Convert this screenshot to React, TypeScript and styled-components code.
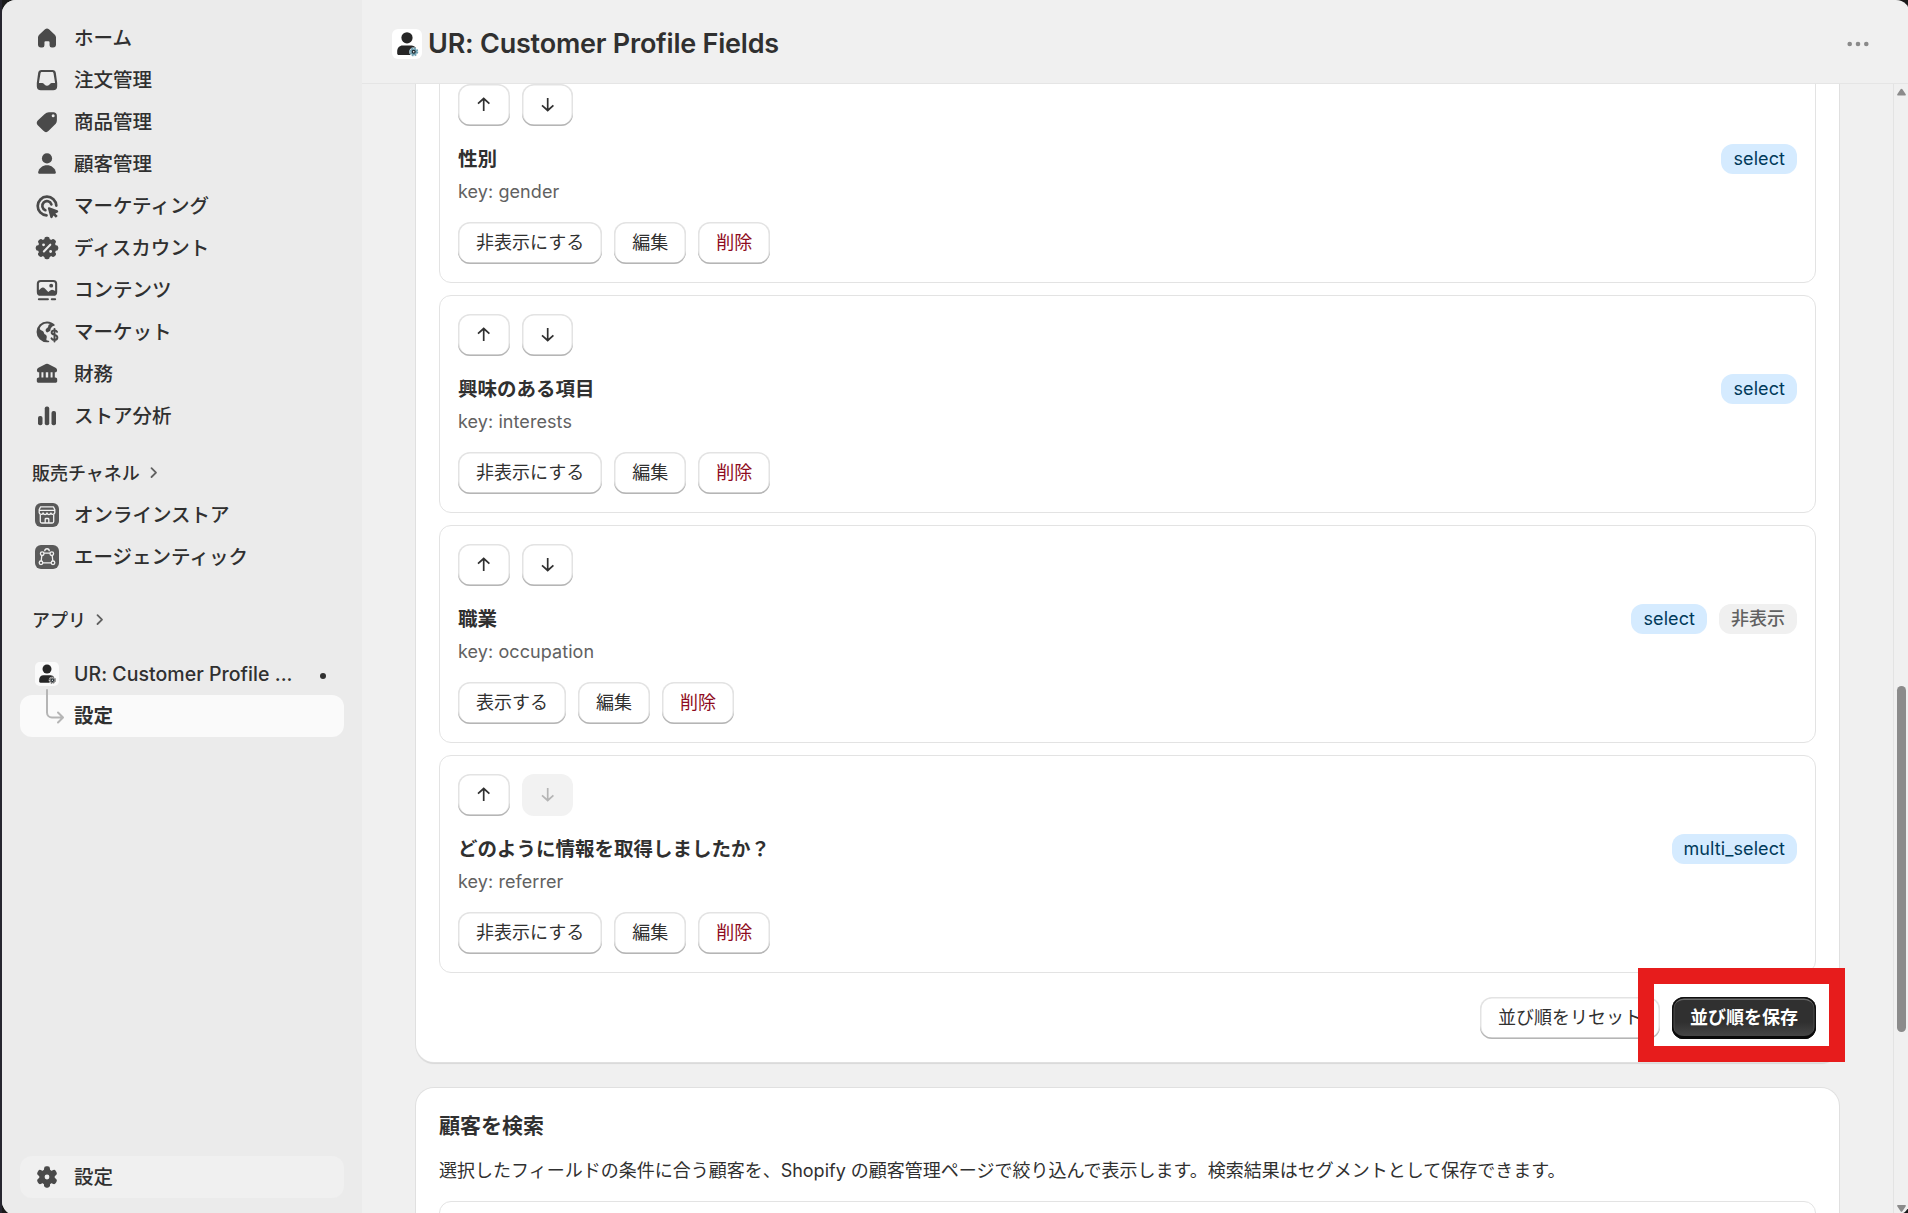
import React from 'react';
import styled, { createGlobalStyle, css } from 'styled-components';

const Global = createGlobalStyle`
  * { box-sizing: border-box; }
  html, body { margin: 0; padding: 0; height: 100%; overflow: hidden; background: #1a1a1a; }
  body { font-family: Inter, "Noto Sans CJK JP", sans-serif; color: #303030; font-size: 18px; }
  button { font: inherit; color: inherit; }
`;

const Desktop = styled.div`
  height: 1213px;
  width: 1908px;
  padding-left: 2px;
  overflow: hidden;
  background: linear-gradient(to right, #26252f 2px, #1a1a1a 2px);
`;

const Frame = styled.div`
  display: flex;
  width: 1908px;
  height: 1215px;
  border-radius: 14px;
  overflow: hidden;
  background: #f0f0f0;
`;

const Sidebar = styled.nav`
  flex: 0 0 360px;
  display: flex;
  flex-direction: column;
  padding: 17px 18px;
  background: #ebebeb;
`;

const NavItem = styled.a<{ $bg?: string; $bold?: boolean }>`
  display: flex;
  align-items: center;
  gap: 12px;
  flex: 0 0 42px;
  padding: 0 12px;
  border-radius: 12px;
  background: ${(p) => p.$bg || 'transparent'};
  font-size: 19.5px;
  font-weight: ${(p) => (p.$bold ? 700 : 500)};
  white-space: nowrap;
`;

const NavLabel = styled.span`
  padding-bottom: 4px;
`;

const AppLabel = styled.span`
  flex: 0 0 219px;
  letter-spacing: 0.04px;
`;

const Dot = styled.span`
  width: 6px;
  height: 6px;
  margin: 3px 0 0 15px;
  border-radius: 50%;
  background: #303030;
`;

const NavSection = styled.div<{ $top: number; $bottom: number }>`
  display: flex;
  align-items: center;
  gap: 6px;
  flex: 0 0 30px;
  margin: ${(p) => p.$top}px 0 ${(p) => p.$bottom}px;
  padding-left: 12px;
  font-weight: 500;
`;

const Spacer = styled.div`
  flex: 1;
`;

const Svg = styled.svg<{ $size?: number }>`
  flex: none;
  display: block;
  overflow: visible;
  width: ${(p) => p.$size || 30}px;
  height: ${(p) => p.$size || 30}px;
`;

const Main = styled.main`
  flex: 1;
  display: flex;
  flex-direction: column;
  min-width: 0;
`;

const Header = styled.header`
  flex: 0 0 84px;
  display: flex;
  align-items: center;
  gap: 6px;
  padding: 4px 38px 0 30px;
  border-bottom: 1px solid #e5e5e5;
`;

const Title = styled.h1`
  flex: 1;
  margin: 0;
  font-size: 27px;
  font-weight: 600;
  letter-spacing: -0.22px;
  line-height: 36px;
  white-space: nowrap;
`;

const Body = styled.div`
  flex: 1;
  display: flex;
  min-height: 0;
`;

const Scroll = styled.div`
  flex: 1;
  display: flex;
  flex-direction: column;
  gap: 26px;
  padding: 0 54px;
  overflow: hidden;
`;

const Card = styled.section<{ $cut?: boolean }>`
  flex: none;
  padding: 23px;
  border-radius: ${(p) => (p.$cut ? '0 0 18px 18px' : '18px')};
  background: #fff;
  box-shadow: 0 0 0 1px #e0e0e0, 0 2px 1px rgba(0, 0, 0, 0.1);
`;

const Fields = styled.div`
  display: flex;
  flex-direction: column;
  gap: 12px;
  margin-top: -42px;
`;

const FieldBox = styled.article`
  display: flex;
  flex-direction: column;
  height: 218px;
  padding: 18px;
  border: 1px solid #e3e3e3;
  border-radius: 12px;
`;

const Row = styled.div`
  display: flex;
  gap: 12px;
`;

const TitleRow = styled.div`
  display: flex;
  align-items: center;
  justify-content: space-between;
  height: 30px;
  margin: 18px 0 6px;
`;

const FieldTitle = styled.h3`
  margin: 0;
  font-size: 19.5px;
  font-weight: 700;
  line-height: 30px;
`;

const FieldKey = styled.p`
  margin: 0 0 18px;
  line-height: 24px;
  letter-spacing: 0.08px;
  color: #616161;
`;

const Badge = styled.span<{ $muted?: boolean }>`
  display: inline-flex;
  align-items: center;
  height: 30px;
  padding: 0 12px;
  border-radius: 12px;
  background: ${(p) => (p.$muted ? '#f0f0f0' : '#d5ebff')};
  color: ${(p) => (p.$muted ? '#616161' : '#003a5a')};
  font-weight: ${(p) => (p.$muted ? 500 : 400)};
  letter-spacing: ${(p) => (p.$muted ? 0 : 0.08)}px;
  line-height: 30px;
`;

const Button = styled.button<{ $tone?: 'critical' | 'primary'; $w?: number }>`
  display: flex;
  align-items: center;
  justify-content: center;
  height: 42px;
  width: ${(p) => (p.$w ? `${p.$w}px` : 'auto')};
  padding: 0 ${(p) => (p.$w ? 0 : 18)}px ${(p) => (p.$w ? 2 : 4)}px;
  border: 0;
  border-radius: 12px;
  background: #fff;
  color: ${(p) => (p.$tone === 'critical' ? '#8e0b21' : '#303030')};
  font-weight: 400;
  white-space: nowrap;
  box-shadow: inset 0 -1.5px 0 #b5b5b5, inset 0 0 0 1.5px #e3e3e3;

  &:disabled {
    background: #f2f2f2;
    color: #b5b5b5;
    box-shadow: none;
  }

  ${(p) =>
    p.$tone === 'primary' &&
    css`
      color: #fff;
      font-weight: 700;
      background: linear-gradient(#303030 60%, #4a4a4a);
      box-shadow: inset 0 -3px 0 #0a0a0a, inset 0 0 0 1.5px #101010, inset 0 3px 0 #6a6a6a, inset 2.5px 0 0 #4c4c4c,
        inset -2.5px 0 0 #4c4c4c;
    `}
`;

const Footer = styled.footer`
  position: relative;
  display: flex;
  justify-content: flex-end;
  gap: 12px;
  margin-top: 24px;
`;

const Highlight = styled.div`
  position: absolute;
  right: -29px;
  top: -29px;
  width: 207px;
  height: 94px;
  border: 16px solid #e71c1c;
`;

const SectionTitle = styled.h2`
  margin: 0;
  font-size: 21px;
  font-weight: 700;
  line-height: 30px;
`;

const Text = styled.p`
  margin: 15px 0;
  line-height: 30px;
  white-space: nowrap;
`;

const Panel = styled.div`
  height: 120px;
  border: 1px solid #e3e3e3;
  border-radius: 12px;
`;

const Track = styled.div`
  flex: 0 0 17px;
  display: flex;
  flex-direction: column;
  align-items: center;
  padding: 4px 2px 2px 0;
  border-left: 1px solid #e3e3e3;
`;

const Thumb = styled.div`
  width: 9px;
  height: 346px;
  margin-top: 589px;
  border-radius: 5px;
  background: #8b8b8b;
`;

const icons: Record<string, React.ReactNode> = {
  home: (
    <path d="M8.7 4.2a1.9 1.9 0 0 1 2.6 0l3.9 3.6c.5.5.8 1.1.8 1.8v4.7a2 2 0 0 1-2 2h-.8a1.5 1.5 0 0 1-1.5-1.5v-2a.7.7 0 0 0-.7-.7h-2a.7.7 0 0 0-.7.7v2a1.500 1.500 0 0 1-1.500 1.500H6a2 2 0 0 1-2-2V9.600c0-.7.3-1.300.8-1.800z" />
  ),
  orders: (
    <path
      fillRule="evenodd"
      d="M6.400 3.300h7.200a2.300 2.300 0 0 1 2.300 2l.9 6.700v2.200a2.700 2.700 0 0 1-2.700 2.700H5.900a2.700 2.700 0 0 1-2.700-2.700V12l.9-6.700a2.300 2.300 0 0 1 2.300-2zm.2 1.300c-.5 0-.8.300-.9.800L4.600 12h2.200c.5 0 .9.200 1.200.6l.5.5c.8.900 2.200.9 3 0l.5-.5c.3-.4.7-.6 1.200-.6h2.200l-1.100-6.600c-.1-.5-.4-.8-.9-.8z"
    />
  ),
  tag: (
    <path
      fillRule="evenodd"
      d="M11.300 3.500h3c1.300 0 2.300 1 2.300 2.300v3c0 1-.4 2-1.100 2.700l-4.400 4.400a2.500 2.500 0 0 1-3.500 0L4 12.300a2.500 2.500 0 0 1 0-3.500l4.500-4.200a4 4 0 0 1 2.800-1.100zm2.800 3.300a1 1 0 1 0 0-2 1 1 0 0 0 0 2z"
    />
  ),
  person: (
    <>
      <circle cx="10" cy="6.300" r="3.400" />
      <path d="M4.100 15.500c.6-2.900 3-4.700 5.900-4.700s5.300 1.800 5.900 4.700c.1.600-.3 1-.9 1H5c-.6 0-1-.4-.9-1z" />
    </>
  ),
  target: (
    <>
      <g fill="none" stroke="#4a4a4a" strokeWidth="1.800" strokeLinecap="round">
        <path d="M9.700 16.200a6.200 6.200 0 1 1 6.500-6.500" />
        <path d="M8.900 12.800a3.100 3.100 0 1 1 4-3.900" />
      </g>
      <path
        d="M10.700 11.400c-.2-.6.300-1.100.9-.9l5.100 1.900c.7.200.7 1.100.1 1.400l-1.400.7 1.500 1.500-1.200 1.200-1.500-1.500-.6 1.300c-.3.600-1.200.6-1.400-.1z"
        transform="translate(-.6 -.2) scale(1.050)"
      />
    </>
  ),
  discount: (
    <>
      {[0, 45, 90, 135, 180, 225, 270, 315].map((a) => (
        <rect key={a} x="8.200" y="2.500" width="3.600" height="6" rx="1.500" transform={`rotate(${a} 10 10)`} />
      ))}
      <circle cx="10" cy="10" r="6.100" />
      <g stroke="#ebebeb" strokeLinecap="round">
        <path d="M7.900 12.300l4.300-4.500" strokeWidth="1.400" />
        <path d="M7.700 7.900h.01M12.400 12.300h.01" strokeWidth="1.900" />
      </g>
    </>
  ),
  content: (
    <>
      <path
        fillRule="evenodd"
        d="M5.800 3.300h8.400a2.600 2.600 0 0 1 2.600 2.600v5.400a2.600 2.600 0 0 1-2.600 2.600H5.800a2.600 2.600 0 0 1-2.600-2.600V5.900a2.600 2.600 0 0 1 2.600-2.600zm0 1.400c-.7 0-1.200.5-1.200 1.200v4.300l1.400-1.300c.8-.7 1.900-.7 2.600.1l2.200 2.400 1.400-1.100c.6-.6 1.600-.6 2.300-.1l.9.500V5.900c0-.7-.5-1.200-1.200-1.200zM12.800 8.400a1.300 1.300 0 1 0 0-2.600 1.300 1.300 0 0 0 0 2.600z"
      />
      <path d="M4.700 16.200h6M13.300 16.200h2.200" stroke="#4a4a4a" strokeWidth="1.400" strokeLinecap="round" transform="translate(-.1 0)" />
    </>
  ),
  markets: (
    <>
      <path
        fillRule="evenodd"
        d="M10 3a7 7 0 0 1 5.300 2.400l-.5.500c-1.500.3-2.600 1.600-2.600 3.200l-1.700 1.100c-.6.300-1-.2-1.300-.8-.4-.9.200-1.500.9-2 .6-.5.7-1 .8-1.600.1-.7.7-1 1.200-1.200A6 6 0 0 0 10 4.400c-2.300 0-3.800 1.100-4.700 2.700-.3.700.1 1.400.8 1.700 1 .4 1.700.9 1.900 1.900.1.700.8.9 1.300 1.300.8.700.6 1.700.3 2.600-.2.700.3 1 1 1.100.6.100 1 .4.900 1a7 7 0 0 1-1.500.2A6.900 6.900 0 0 1 10 3z"
      />
      <path
        d="M16.700 9.900c-.3-.7-1-1-1.700-1-1.100 0-1.900.6-1.900 1.500 0 1.100 1 1.400 1.900 1.600 1 .2 1.900.6 1.900 1.700 0 1-.9 1.600-1.900 1.600s-1.700-.4-2-1.100M15 7.900v8.500"
        fill="none"
        stroke="#4a4a4a"
        strokeWidth="1.300"
        strokeLinecap="round"
      />
    </>
  ),
  bank: (
    <path
      fillRule="evenodd"
      d="M9.200 3.400a1.700 1.700 0 0 1 1.600 0l4.900 2.400c.6.300 1 .9 1 1.600v.3c0 .7-.5 1.200-1.200 1.200h-.3v3.500h.4c.7 0 1.200.5 1.200 1.200v1.300c0 .5-.4.900-.9.900H4.100a.9.900 0 0 1-.9-.9v-1.300c0-.7.5-1.200 1.200-1.200h.4V8.900h-.3c-.7 0-1.200-.5-1.200-1.200v-.3c0-.7.4-1.300 1-1.600zM6.300 8.900v3.500h1.300V8.900zm2.900 0v3.500h1.600V8.900zm3.200 0v3.500h1.300V8.900z"
    />
  ),
  chart: (
    <>
      <rect x="4" y="10" width="3" height="6.200" rx="1.300" />
      <rect x="8.500" y="3.700" width="3" height="12.500" rx="1.300" />
      <rect x="13" y="6.700" width="3" height="9.500" rx="1.300" />
    </>
  ),
  gear: (
    <>
      {[0, 60, 120, 180, 240, 300].map((a) => (
        <rect key={a} x="8" y="2.900" width="4" height="6" rx="1.600" transform={`rotate(${a} 10 10)`} />
      ))}
      <circle cx="10" cy="10" r="5.200" />
      <circle cx="10" cy="10" r="1.600" fill="#f0f0f0" />
    </>
  ),
};

const Icon = ({ name }: { name: string }) => (
  <Svg viewBox="0 0 20 20" fill="#4a4a4a">
    {icons[name]}
  </Svg>
);

const StoreIcon = () => (
  <Svg viewBox="0 0 30 30" fill="none" stroke="#f2f2f2" strokeWidth="1.300" strokeLinejoin="round">
    <rect x="3" y="3" width="24" height="24" rx="6" fill="#5a5a5a" stroke="none" />
    <path d="M8.600 6.900h12.800l1.400 2.600v3.200a2 2 0 0 1-3.900.3 2 2 0 0 1-3.900 0 2 2 0 0 1-3.900 0 2 2 0 0 1-3.900-.3V9.500zM7.200 10.300h15.600" />
    <path d="M8.300 15v6.500c0 .9.600 1.500 1.500 1.500h10.400c.9 0 1.500-.6 1.500-1.500V15M13.200 22.500v-3.200c0-.5.300-.8.800-.8h2c.5 0 .8.300.8.800v3.200" />
  </Svg>
);

const AgentIcon = () => (
  <Svg viewBox="0 0 30 30" fill="none" stroke="#f2f2f2" strokeWidth="1.300">
    <rect x="3" y="3" width="24" height="24" rx="6" fill="#5a5a5a" stroke="none" />
    <path d="M11.800 11.200h6.400M9.800 13.400L9.200 19M20.200 13.400l.6 5.600M10.900 20.800h8.200M12.700 9.200c0-3.300 4.600-3.300 4.600 0" />
    <circle cx="10.200" cy="11.700" r="1.800" />
    <circle cx="19.800" cy="11.700" r="1.800" />
    <circle cx="9" cy="20.800" r="1.800" />
    <circle cx="21" cy="20.800" r="1.800" />
  </Svg>
);

const AppIcon = ({ pad, gear, bg }: { pad: number; gear: string; bg: string }) => (
  <Svg viewBox={`${-pad} ${-pad} ${30 + 2 * pad} ${30 + 2 * pad}`}>
    <rect width="30" height="30" rx="6" fill={bg} />
    <circle cx="15" cy="8.800" r="5.600" fill="#262626" />
    <path d="M5.200 24.500v-2.400c0-3.200 2.300-5.600 5.400-5.600h8.800c2 0 3.600 1 4.500 2.500l-5 7H6.700c-.9 0-1.500-.6-1.500-1.500z" fill="#262626" />
    <circle cx="21.700" cy="22.800" r="4.400" fill={bg} />
    <circle cx="21.700" cy="22.800" r="2.500" fill="#1f2a30" />
    <circle cx="21.700" cy="22.800" r="3.600" fill="none" stroke={gear} strokeWidth="1.900" strokeDasharray="1.700 1.130" />
    <circle cx="21.700" cy="22.800" r="2.700" fill="none" stroke={gear} strokeWidth="1.300" />
    <circle cx="21.700" cy="22.800" r=".8" fill={bg} />
  </Svg>
);

const Chevron = () => (
  <Svg $size={16} viewBox="0 0 16 16" fill="none" stroke="#616161" strokeWidth="1.800" strokeLinecap="round" strokeLinejoin="round">
    <path d="M5.500 4.200L10 8.600l-4.500 4.400" />
  </Svg>
);

const SubArrow = () => (
  <Svg viewBox="0 0 30 30" fill="none" stroke="#b5b5b5" strokeWidth="2" strokeLinecap="round" strokeLinejoin="round">
    <path d="M15 -11V11.500a5 5 0 0 0 5 5h10.500M26 11.500l5 5-5 5" />
  </Svg>
);

const Arrow = ({ down }: { down?: boolean }) => (
  <Svg $size={16} viewBox="0 0 16 16" fill="none" stroke="currentColor" strokeWidth="1.700">
    <path d={down ? 'M7.700 2v12.500M2 9.300L7.700 14.500l5.700-5.200' : 'M7.700 15V2.500M2 7.700L7.700 2.500l5.700 5.200'} />
  </Svg>
);

const nav: [string, string][] = [
  ['home', 'ホーム'],
  ['orders', '注文管理'],
  ['tag', '商品管理'],
  ['person', '顧客管理'],
  ['target', 'マーケティング'],
  ['discount', 'ディスカウント'],
  ['content', 'コンテンツ'],
  ['markets', 'マーケット'],
  ['bank', '財務'],
  ['chart', 'ストア分析'],
];

type Field = { title: string; name: string; type: string; hidden?: boolean; last?: boolean };

const fields: Field[] = [
  { title: '性別', name: 'gender', type: 'select' },
  { title: '興味のある項目', name: 'interests', type: 'select' },
  { title: '職業', name: 'occupation', type: 'select', hidden: true },
  { title: 'どのように情報を取得しましたか？', name: 'referrer', type: 'multi_select', last: true },
];

const FieldCard = ({ title, name, type, hidden, last }: Field) => (
  <FieldBox>
    <Row>
      <Button $w={52} aria-label="上へ">
        <Arrow />
      </Button>
      <Button $w={51} aria-label="下へ" disabled={last}>
        <Arrow down />
      </Button>
    </Row>
    <TitleRow>
      <FieldTitle>{title}</FieldTitle>
      <Row>
        <Badge>{type}</Badge>
        {hidden && <Badge $muted>非表示</Badge>}
      </Row>
    </TitleRow>
    <FieldKey>key: {name}</FieldKey>
    <Row>
      <Button>{hidden ? '表示する' : '非表示にする'}</Button>
      <Button>編集</Button>
      <Button $tone="critical">削除</Button>
    </Row>
  </FieldBox>
);

export default function App() {
  return (
    <Desktop>
      <Global />
      <Frame>
        <Sidebar>
          {nav.map(([icon, label]) => (
            <NavItem key={icon}>
              <Icon name={icon} />
              <NavLabel>{label}</NavLabel>
            </NavItem>
          ))}
          <NavSection $top={19.5} $bottom={7.5}>
            販売チャネル
            <Chevron />
          </NavSection>
          <NavItem>
            <StoreIcon />
            <NavLabel>オンラインストア</NavLabel>
          </NavItem>
          <NavItem>
            <AgentIcon />
            <NavLabel>エージェンティック</NavLabel>
          </NavItem>
          <NavSection $top={26} $bottom={19}>
            アプリ
            <Chevron />
          </NavSection>
          <NavItem>
            <AppIcon pad={3.75} gear="#777" bg="#fafafa" />
            <AppLabel>UR: Customer Profile ...</AppLabel>
            <Dot />
          </NavItem>
          <NavItem $bg="#fafafa" $bold>
            <SubArrow />
            <NavLabel>設定</NavLabel>
          </NavItem>
          <Spacer />
          <NavItem $bg="#f0f0f0">
            <Icon name="gear" />
            <NavLabel>設定</NavLabel>
          </NavItem>
        </Sidebar>
        <Main>
          <Header>
            <AppIcon pad={0} gear="#6f9fb0" bg="#fff" />
            <Title>UR: Customer Profile Fields</Title>
            <Svg $size={28} viewBox="0 0 28 28" fill="#8a8a8a">
              <circle cx="5.700" cy="14" r="2.300" />
              <circle cx="14" cy="14" r="2.300" />
              <circle cx="22.300" cy="14" r="2.300" />
            </Svg>
          </Header>
          <Body>
            <Scroll>
              <Card $cut>
                <Fields>
                  {fields.map((f) => (
                    <FieldCard key={f.name} {...f} />
                  ))}
                </Fields>
                <Footer>
                  <Button>並び順をリセット</Button>
                  <Highlight />
                  <Button $tone="primary">並び順を保存</Button>
                </Footer>
              </Card>
              <Card>
                <SectionTitle>顧客を検索</SectionTitle>
                <Text>
                  選択したフィールドの条件に合う顧客を、Shopify の顧客管理ページで絞り込んで表示します。検索結果はセグメントとして保存できます。
                </Text>
                <Panel />
              </Card>
            </Scroll>
            <Track>
              <Svg $size={9} viewBox="0 0 9 9" fill="#8b8b8b">
                <path d="M3.600 1.200c.4-.7 1.400-.7 1.800 0l3.200 4.800c.5.800.2 1.500-.7 1.500H1.100c-.9 0-1.200-.7-.7-1.500z" />
              </Svg>
              <Thumb />
              <Spacer />
              <Svg $size={9} viewBox="0 0 9 9" fill="#8b8b8b">
                <path d="M3.600 7.300c.4.700 1.400.7 1.800 0l3.200-4.800c.5-.8.2-1.500-.7-1.500H1.100c-.9 0-1.200.7-.7 1.500z" />
              </Svg>
            </Track>
          </Body>
        </Main>
      </Frame>
    </Desktop>
  );
}
